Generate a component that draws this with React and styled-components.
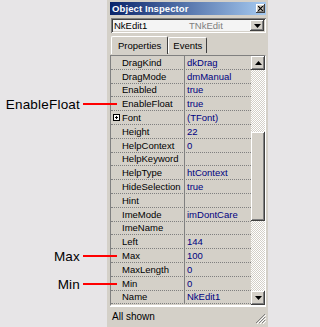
import styled, { createGlobalStyle } from "styled-components";

const GlobalStyle = createGlobalStyle`
  html, body {
    margin: 0;
    padding: 0;
    background: #e7e5e7;
  }
  body {
    font-family: "Liberation Sans", Arial, sans-serif;
  }
`

const properties = [
    { name: "DragKind", value: "dkDrag" },
    { name: "DragMode", value: "dmManual" },
    { name: "Enabled", value: "true" },
    { name: "EnableFloat", value: "true" },
    { name: "Font", value: "(TFont)", expandable: true },
    { name: "Height", value: "22" },
    { name: "HelpContext", value: "0" },
    { name: "HelpKeyword", value: "" },
    { name: "HelpType", value: "htContext" },
    { name: "HideSelection", value: "true" },
    { name: "Hint", value: "" },
    { name: "ImeMode", value: "imDontCare" },
    { name: "ImeName", value: "" },
    { name: "Left", value: "144" },
    { name: "Max", value: "100" },
    { name: "MaxLength", value: "0" },
    { name: "Min", value: "0" },
    { name: "Name", value: "NkEdit1" },
]

const callouts = [
    { label: "EnableFloat", top: 96 },
    { label: "Max", top: 248 },
    { label: "Min", top: 276 },
]

const raised = `
    box-shadow: inset -1px -1px #404040, inset 1px 1px #ffffff, inset -2px -2px #808080;
`

const Page = styled.div`
    position: relative;
    display: flex;
    width: 268px;
    height: 327px;
    overflow: hidden;
`

const Margin = styled.div`
    width: 107px;
    flex-shrink: 0;
`

const Callout = styled.div`
    position: absolute;
    top: ${p => p.$top}px;
    right: 151px;
    height: 16px;
    display: flex;
    align-items: center;
    gap: 3px;
    z-index: 2;
    span{
        font-size: 13.5px;
        color: #000;
        letter-spacing: 0.2px;
    }
    i{
        display: block;
        width: 34px;
        height: 2px;
        background: #ff0000;
    }
`

const Window = styled.div`
    width: 161px;
    display: flex;
    flex-direction: column;
    background: #d4d0c8;
    padding: 2px 2px 0 3px;
    box-sizing: border-box;
    font-size: 9.5px;
`

const TitleBar = styled.div`
    height: 13px;
    display: flex;
    align-items: center;
    justify-content: space-between;
    padding: 0 1px 0 2px;
    background: linear-gradient(to right, #0a246a, #a6caf0);
    color: #fff;
    font-weight: 700;
    font-size: 9.5px;
    letter-spacing: 0.1px;
`

const CloseButton = styled.div`
    width: 9px;
    height: 9px;
    background: #d4d0c8;
    display: flex;
    align-items: center;
    justify-content: center;
    ${raised}
`

const Combo = styled.div`
    margin: 3px 0 0 1px;
    height: 15px;
    display: flex;
    align-items: center;
    background: #f4f4f4;
    box-shadow: inset 1px 1px #808080, inset -1px -1px #ffffff, inset 2px 2px #404040, inset -2px -2px #d4d0c8;
    padding: 0 2px 0 3px;
    color: #000;
    span{
        width: 75px;
    }
    em{
        font-style: normal;
        color: #808080;
        flex: 1;
    }
`

const DropButton = styled.div`
    width: 14px;
    height: 11px;
    background: #d4d0c8;
    display: flex;
    align-items: center;
    justify-content: center;
    ${raised}
`

const TabStrip = styled.div`
    margin-top: 2px;
    height: 19px;
    display: flex;
    align-items: flex-end;
    padding-left: 1px;
`

const Tab = styled.div`
    height: ${p => p.$active ? 18 : 16}px;
    padding: 0 ${p => p.$active ? 6 : 4}px;
    display: flex;
    align-items: center;
    box-sizing: border-box;
    border-top: 1px solid #fff;
    border-left: 1px solid #fff;
    border-right: 1px solid #404040;
    border-radius: 2px 2px 0 0;
    color: #000;
    ${p => !p.$active && "margin-bottom: 1px;"}
`

const Grid = styled.div`
    margin-top: 1px;
    height: 251px;
    display: flex;
    border-top: 1px solid #808080;
    border-left: 1px solid #808080;
    border-bottom: 1px solid #fff;
    border-right: 1px solid #fff;
    box-sizing: border-box;
`

const Rows = styled.div`
    flex: 1;
    display: flex;
    flex-direction: column;
`

const Row = styled.div`
    height: 13.8px;
    box-sizing: border-box;
    display: grid;
    grid-template-columns: 73px 1fr;
    border-bottom: 1px dotted #808080;
`

const NameCell = styled.div`
    display: flex;
    align-items: center;
    padding-left: 2px;
    color: #000;
    white-space: nowrap;
    overflow: hidden;
`

const ExpandSlot = styled.span`
    width: 9px;
    flex-shrink: 0;
    display: flex;
    align-items: center;
`

const PlusBox = styled.span`
    position: relative;
    width: 7px;
    height: 7px;
    box-sizing: border-box;
    border: 1px solid #000;
    background: #fff;
    &::before{
        content: "";
        position: absolute;
        left: 1px;
        top: 2px;
        width: 3px;
        height: 1px;
        background: #000;
    }
    &::after{
        content: "";
        position: absolute;
        left: 2px;
        top: 1px;
        width: 1px;
        height: 3px;
        background: #000;
    }
`

const ValueCell = styled.div`
    display: flex;
    align-items: center;
    padding-left: 2px;
    border-left: 1px solid #808080;
    color: #000080;
    white-space: nowrap;
    overflow: hidden;
`

const ScrollBar = styled.div`
    width: 14px;
    display: flex;
    flex-direction: column;
`

const ScrollButton = styled.div`
    height: 14px;
    flex-shrink: 0;
    background: #d4d0c8;
    display: flex;
    align-items: center;
    justify-content: center;
    ${raised}
`

const Track = styled.div`
    height: ${p => p.$h ? `${p.$h}px` : "auto"};
    flex: ${p => p.$h ? "none" : 1};
    background: repeating-conic-gradient(#ffffff 0 25%, #d4d0c8 0 50%) 0 0 / 2px 2px;
`

const Thumb = styled.div`
    height: 89px;
    flex-shrink: 0;
    background: #d4d0c8;
    ${raised}
`

const StatusBar = styled.div`
    height: 20px;
    display: flex;
    align-items: center;
    justify-content: space-between;
    padding-left: 2px;
    border-top: 1px solid #fff;
    box-sizing: border-box;
    color: #000;
    font-size: 10px;
`

const Grip = styled.svg`
    align-self: flex-end;
    margin-bottom: 2px;
`

const Arrow = ({ up }) => (
    <svg width="7" height="4" viewBox="0 0 7 4">
        <path d={up ? "M3.5 0 L7 4 L0 4 Z" : "M0 0 L7 0 L3.5 4 Z"} fill="#000" />
    </svg>
)

const App = () => {
    return (
        <Page>
            <GlobalStyle />
            <Margin />
            {callouts.map(c => (
                <Callout key={c.label} $top={c.top}>
                    <span>{c.label}</span>
                    <i />
                </Callout>
            ))}
            <Window>
                <TitleBar>
                    <span>Object Inspector</span>
                    <CloseButton>
                        <svg width="5" height="5" viewBox="0 0 5 5">
                            <path d="M0 0 L5 5 M5 0 L0 5" stroke="#000" strokeWidth="1.2" />
                        </svg>
                    </CloseButton>
                </TitleBar>
                <Combo>
                    <span>NkEdit1</span>
                    <em>TNkEdit</em>
                    <DropButton><Arrow /></DropButton>
                </Combo>
                <TabStrip>
                    <Tab $active>Properties</Tab>
                    <Tab>Events</Tab>
                </TabStrip>
                <Grid>
                    <Rows>
                        {properties.map(p => (
                            <Row key={p.name}>
                                <NameCell>
                                    <ExpandSlot>{p.expandable && <PlusBox />}</ExpandSlot>
                                    {p.name}
                                </NameCell>
                                <ValueCell>{p.value}</ValueCell>
                            </Row>
                        ))}
                    </Rows>
                    <ScrollBar>
                        <ScrollButton><Arrow up /></ScrollButton>
                        <Track $h={62} />
                        <Thumb />
                        <Track />
                        <ScrollButton><Arrow /></ScrollButton>
                    </ScrollBar>
                </Grid>
                <StatusBar>
                    <span>All shown</span>
                    <Grip width="11" height="11" viewBox="0 0 11 11">
                        <path d="M10 1 L1 10 M10 4 L4 10 M10 7 L7 10" stroke="#808080" strokeWidth="1" />
                        <path d="M11 2 L2 11 M11 5 L5 11 M11 8 L8 11" stroke="#ffffff" strokeWidth="1" />
                    </Grip>
                </StatusBar>
            </Window>
        </Page>
    )
}

export default App
